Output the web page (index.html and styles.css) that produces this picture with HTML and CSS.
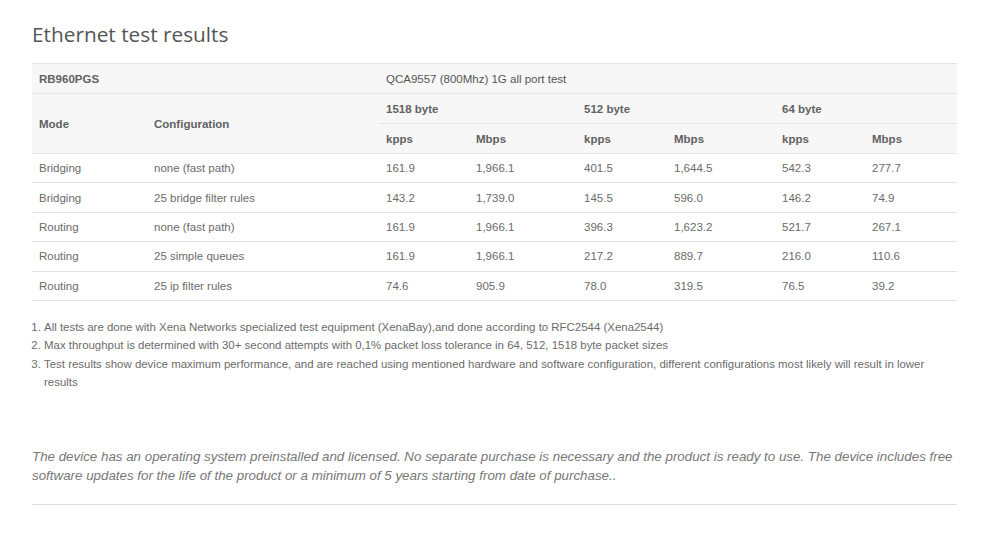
FILE: index.html
```html
<!DOCTYPE html>
<html>
<head>
<meta charset="utf-8">
<link rel="stylesheet" href="styles.css">
</head>
<body>
<div class="page">
  <h2 class="title">Ethernet test results</h2>
  <table class="results">
    <colgroup>
      <col class="c-mode"><col class="c-conf">
      <col class="c-k"><col class="c-m"><col class="c-k"><col class="c-m"><col class="c-k"><col class="c-m2">
    </colgroup>
    <thead>
      <tr class="h1">
        <th colspan="2">RB960PGS</th>
        <th colspan="6" class="normal">QCA9557 (800Mhz) 1G all port test</th>
      </tr>
      <tr class="h2">
        <th rowspan="2">Mode</th>
        <th rowspan="2">Configuration</th>
        <th colspan="2">1518 byte</th>
        <th colspan="2">512 byte</th>
        <th colspan="2">64 byte</th>
      </tr>
      <tr class="h3">
        <th>kpps</th><th>Mbps</th><th>kpps</th><th>Mbps</th><th>kpps</th><th>Mbps</th>
      </tr>
    </thead>
    <tbody>
      <tr><td>Bridging</td><td>none (fast path)</td><td>161.9</td><td>1,966.1</td><td>401.5</td><td>1,644.5</td><td>542.3</td><td>277.7</td></tr>
      <tr><td>Bridging</td><td>25 bridge filter rules</td><td>143.2</td><td>1,739.0</td><td>145.5</td><td>596.0</td><td>146.2</td><td>74.9</td></tr>
      <tr><td>Routing</td><td>none (fast path)</td><td>161.9</td><td>1,966.1</td><td>396.3</td><td>1,623.2</td><td>521.7</td><td>267.1</td></tr>
      <tr><td>Routing</td><td>25 simple queues</td><td>161.9</td><td>1,966.1</td><td>217.2</td><td>889.7</td><td>216.0</td><td>110.6</td></tr>
      <tr><td>Routing</td><td>25 ip filter rules</td><td>74.6</td><td>905.9</td><td>78.0</td><td>319.5</td><td>76.5</td><td>39.2</td></tr>
    </tbody>
  </table>
  <ol class="notes">
    <li>All tests are done with Xena Networks specialized test equipment (XenaBay),and done according to RFC2544 (Xena2544)</li>
    <li>Max throughput is determined with 30+ second attempts with 0,1% packet loss tolerance in 64, 512, 1518 byte packet sizes</li>
    <li>Test results show device maximum performance, and are reached using mentioned hardware and software configuration, different configurations most likely will result in lower results</li>
  </ol>
  <p class="license">The device has an operating system preinstalled and licensed. No separate purchase is necessary and the product is ready to use. The device includes free software updates for the life of the product or a minimum of 5 years starting from date of purchase..</p>
  <hr class="rule">
</div>
</body>
</html>
```

FILE: styles.css
```css
html, body {
  margin: 0;
  padding: 0;
  background: #fff;
}
.page {
  width: 925px;
  padding: 19px 0 0 32px;
  font-family: "Liberation Sans", Arial, sans-serif;
  color: #666;
}
.title {
  margin: 0 0 14px 0;
  font-family: "Open Sans", sans-serif;
  font-weight: 400;
  font-size: 20.8px;
  line-height: 30px;
  color: #555;
}
.results {
  width: 925px;
  border-collapse: collapse;
  table-layout: fixed;
  font-size: 11.5px;
  border-top: 1px solid #e6e6e6;
}
.c-mode { width: 115px; }
.c-conf { width: 232px; }
.c-k { width: 90px; }
.c-m { width: 108px; }
.c-m2 { width: 92px; }
.results th {
  text-align: left;
  font-weight: 700;
  color: #626262;
  background: #f7f7f7;
  padding: 0 7px;
  height: 29px;
  border-bottom: 1px solid #e6e6e6;
  vertical-align: middle;
}
.results th.normal {
  font-weight: 400;
  color: #555;
}
.results td {
  padding: 0 7px;
  height: 28.4px;
  color: #6b6b6b;
  border-bottom: 1px solid #e3e3e3;
  vertical-align: middle;
}
.notes {
  margin: 17px 0 0 0;
  padding-left: 12px;
  font-size: 11.45px;
  line-height: 18.3px;
  color: #6b6b6b;
}
.license {
  margin: 56px 0 0 0;
  font-size: 13.35px;
  font-style: italic;
  line-height: 19px;
  color: #777;
}
.rule {
  margin: 19px 0 0 0;
  border: 0;
  border-top: 1px solid #ddd;
  height: 0;
}
```
